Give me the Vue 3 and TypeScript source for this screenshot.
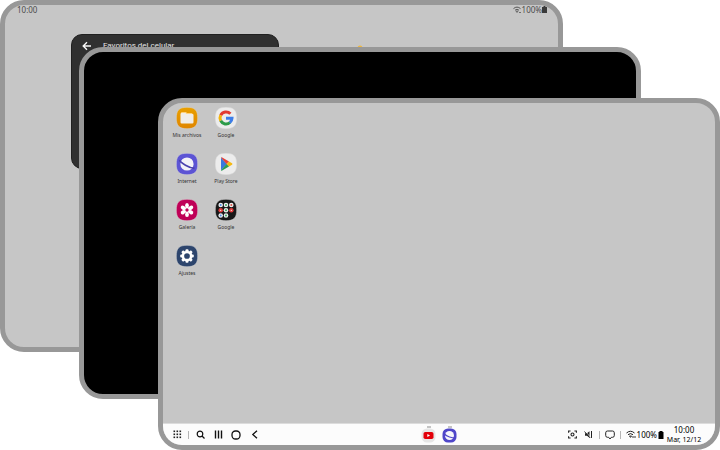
<script setup lang="ts">
type IconName = 'files' | 'google' | 'internet' | 'play' | 'gallery' | 'folder' | 'settings'

interface AppShortcut {
  label: string
  icon: IconName
}

const columns: AppShortcut[][] = [
  [
    { label: 'Mis archivos', icon: 'files' },
    { label: 'Internet', icon: 'internet' },
    { label: 'Galería', icon: 'gallery' },
    { label: 'Ajustes', icon: 'settings' },
  ],
  [
    { label: 'Google', icon: 'google' },
    { label: 'Play Store', icon: 'play' },
    { label: 'Google', icon: 'folder' },
  ],
]

const petals: number[] = [0, 60, 120, 180, 240, 300]
const teeth: number[] = [0, 45, 90, 135, 180, 225, 270, 315]
const dots: number[] = [1, 4, 7]
const folderItems: { x: number; y: number; red: boolean }[] = [
  { x: 5.7, y: 6, red: false },
  { x: 11, y: 6, red: false },
  { x: 16.3, y: 6, red: false },
  { x: 5.7, y: 11.3, red: true },
  { x: 11, y: 11.3, red: false },
  { x: 16.3, y: 11.3, red: true },
  { x: 5.7, y: 16.5, red: false },
  { x: 11, y: 16.5, red: false },
]
</script>

<template>
  <main class="stage">
    <section class="device device-back">
      <header class="status">
        <time>10:00</time>
        <span class="status-right">
          <svg width="9" height="8" viewBox="0 0 9 8" fill="none" stroke="#555">
            <path d="M.5 2.6Q4 -.4 7.5 2.6M2 4.2Q4 2.6 6 4.2" />
            <path d="M4 6.5 3 5.2h2zM6 6.5h2" stroke-width=".8" />
          </svg>
          100%
          <svg width="5" height="7" viewBox="0 0 5 7" fill="#3a3a3a">
            <path d="M1.5 0h2v1H5v6H0V1h1.500z" />
          </svg>
        </span>
      </header>
      <article class="panel">
        <button class="panel-back" aria-label="Atrás">
          <svg width="10" height="10" viewBox="0 0 10 10" fill="none" stroke="#f5f5f5" stroke-width="1.4">
            <path d="M9 5H1.500M5 1.200 1.200 5 5 8.800" />
          </svg>
        </button>
        <h2>Favoritos del celular</h2>
      </article>
      <svg class="spark" width="6" height="6" viewBox="0 0 6 6">
        <circle cx="3" cy="3" r="2.500" fill="#efb73e" />
      </svg>
    </section>

    <section class="device device-middle"></section>

    <section class="device device-front">
      <nav class="desktop">
        <div v-for="(column, c) in columns" :key="c" class="column">
          <button v-for="app in column" :key="app.icon" class="app">
            <svg width="22" height="22" viewBox="0 0 22 22">
              <defs>
                <linearGradient id="amber" x1="0" y1="0" x2="0" y2="1">
                  <stop offset="0" stop-color="#e9a000" />
                  <stop offset="1" stop-color="#df8500" />
                </linearGradient>
              </defs>
              <path
                class="tile"
                :class="app.icon"
                d="M11 .3C18.800 .3 21.700 3.200 21.700 11S18.800 21.700 11 21.700 .3 18.800 .3 11 3.200 .3 11 .3z"
              />
              <g v-if="app.icon === 'files'">
                <path d="M5 6q0-1 1-1h4l1 1h4.500q1 0 1 1v3H5z" fill="#ffd27a" />
                <path d="M4.500 7q0-1 1-1h4l1 1h6q1 0 1 1v7.300q0 1.200-1.200 1.200H5.700q-1.200 0-1.200-1.200z" fill="#f0ede8" />
              </g>
              <g v-else-if="app.icon === 'google'" fill="none" stroke-width="3">
                <path d="M5.700 8.200A6 6 0 0 1 15.400 6.800" stroke="#e23a30" />
                <path d="M5.700 13.800A6 6 0 0 1 5.700 8.200" stroke="#f3b50c" />
                <path d="M15 15.500A6 6 0 0 1 5.700 13.800" stroke="#2c9b48" />
                <path d="M11 11.200h6A6 6 0 0 1 14.800 15.600" stroke="#3d7de8" />
              </g>
              <g v-else-if="app.icon === 'internet'">
                <circle cx="11" cy="11" r="6.600" fill="#f4f3f8" />
                <path d="M3.500 7Q4 9 9.500 12.200T18.500 15" fill="none" stroke="#4b43ae" stroke-width="1.700" />
              </g>
              <g v-else-if="app.icon === 'play'">
                <path d="M6 4.500v13L12 11z" fill="#3a78dc" />
                <path d="M6 4.500q.5-.5 1.200-.1L14 8.500 11.500 11z" fill="#e84236" />
                <path d="M14 8.500 17 10.200q1 .8 0 1.600L14 13.500 11.500 11z" fill="#f5b912" />
                <path d="M6 17.500q.5.500 1.200.1L14 13.500 11.500 11z" fill="#2d9d50" />
              </g>
              <g v-else-if="app.icon === 'gallery'">
                <ellipse
                  v-for="angle in petals"
                  :key="angle"
                  cx="11"
                  cy="6.500"
                  rx="1.900"
                  ry="2.500"
                  fill="#fff"
                  :transform="`rotate(${angle} 11 11)`"
                />
                <circle cx="11" cy="11" r="2.300" fill="none" stroke="#fff" stroke-width="1.200" />
              </g>
              <g v-else-if="app.icon === 'folder'">
                <g v-for="(item, i) in folderItems" :key="i">
                  <circle :cx="item.x" :cy="item.y" r="2.300" :fill="item.red ? '#e03b3b' : '#eee'" />
                  <circle v-if="!item.red" :cx="item.x" :cy="item.y" r="1" :fill="['#4c8be8', '#38a35c', '#dd5547'][i % 3]" />
                  <circle v-else :cx="item.x" :cy="item.y" r=".6" fill="#fff" />
                </g>
              </g>
              <g v-else>
                <rect
                  v-for="angle in teeth"
                  :key="angle"
                  x="9.500"
                  y="4.200"
                  width="3"
                  height="3"
                  rx="1"
                  fill="#fff"
                  :transform="`rotate(${angle} 11 11)`"
                />
                <circle cx="11" cy="11" r="4.100" fill="none" stroke="#fff" stroke-width="2.500" />
              </g>
            </svg>
            <span>{{ app.label }}</span>
          </button>
        </div>
      </nav>

      <footer class="taskbar">
        <div class="group">
          <button aria-label="Aplicaciones">
            <svg width="9" height="9" viewBox="0 0 9 9" fill="#222">
              <template v-for="y in dots" :key="y">
                <rect v-for="x in dots" :key="x" :x="x - .5" :y="y - .5" width="1.600" height="1.600" />
              </template>
            </svg>
          </button>
          <i class="divider"></i>
          <button aria-label="Buscar">
            <svg width="9" height="9" viewBox="0 0 9 9" fill="none" stroke="#111" stroke-width="1.200">
              <circle cx="4" cy="4" r="2.800" />
              <path d="M6 6 8.500 8.500" />
            </svg>
          </button>
          <button aria-label="Recientes">
            <svg width="9" height="9" viewBox="0 0 9 9" stroke="#111" stroke-width="1.400">
              <path d="M1.500 .5v8M4.500 .5v8M7.500 .5v8" />
            </svg>
          </button>
          <button aria-label="Inicio">
            <svg width="10" height="10" viewBox="0 0 10 10" fill="none" stroke="#111" stroke-width="1.300">
              <rect x="1" y="1" width="8" height="8" rx="3.500" />
            </svg>
          </button>
          <button aria-label="Atrás">
            <svg width="9" height="9" viewBox="0 0 9 9" fill="none" stroke="#111" stroke-width="1.300">
              <path d="M7 .7 2.800 4.500 7 8.300" />
            </svg>
          </button>
        </div>

        <div class="group running">
          <button aria-label="YouTube">
            <svg width="15" height="15" viewBox="0 0 15 15">
              <rect x=".5" y=".5" width="14" height="14" rx="5.500" fill="#e6e6e6" />
              <rect x="2.500" y="4" width="10" height="7" rx="1.800" fill="#e3000b" />
              <path d="M6.300 5.900v3.200L9 7.500z" fill="#fff" />
            </svg>
          </button>
          <button aria-label="Internet">
            <svg width="15" height="15" viewBox="0 0 15 15">
              <rect x=".5" y=".5" width="14" height="14" rx="5.500" fill="#4f46c9" />
              <circle cx="7.500" cy="7.500" r="4.500" fill="#f6f6fb" />
              <path d="M2 5.500Q4 8 7.500 9T13 10" fill="none" stroke="#4f46c9" stroke-width="1.300" />
            </svg>
          </button>
        </div>

        <div class="group tray">
          <button aria-label="Captura de pantalla">
            <svg width="9" height="9" viewBox="0 0 9 9" fill="none" stroke="#222" stroke-width="1.100">
              <path d="M.6 2.800V1h2M6.400 1h2v1.800M8.400 6.200V8h-2M2.600 8h-2V6.200" />
              <circle cx="4.500" cy="4.500" r="1.500" />
            </svg>
          </button>
          <button aria-label="Silencio">
            <svg width="9" height="9" viewBox="0 0 9 9" fill="none" stroke="#222">
              <path d="M1 3.300h2L5.500 1.200v6.600L3 5.700H1z" fill="#222" stroke="none" />
              <path d="M7.500 1v7" />
              <path d="M1 1 7 8" stroke="#fcfcfc" stroke-width=".8" />
              <path d="M.5 1.500 6.200 8" stroke-width=".9" />
            </svg>
          </button>
          <i class="divider"></i>
          <button aria-label="Notificaciones">
            <svg width="10" height="10" viewBox="0 0 10 10" fill="none" stroke="#222">
              <path d="M2.500 1h5q1.800 0 1.800 1.800v2.700q0 1.800-1.800 1.800H6.300L5 9 3.700 7.300H2.500Q.7 7.300.7 5.500V2.800Q.7 1 2.500 1z" />
            </svg>
          </button>
          <i class="divider"></i>
          <button class="power" aria-label="Ajustes rápidos">
            <svg width="10" height="9" viewBox="0 0 10 9" fill="none" stroke="#222">
              <path d="M.5 3Q4.500-.5 8.500 3M2 4.700Q4.500 2.500 7 4.700" />
              <path d="M4.500 7.400 3.500 6h2zM7 6v2M9 6v2" stroke-width=".9" />
            </svg>
            <span>100%</span>
            <svg width="6" height="8" viewBox="0 0 6 8" fill="#000">
              <path d="M1.500 0h3v1h1v7h-5V1h1z" />
            </svg>
          </button>
          <div class="clock">
            <time>10:00</time>
            <small>Mar, 12/12</small>
          </div>
        </div>
      </footer>
    </section>
  </main>
</template>

<style>
body {
  margin: 0;
  background: #fff;
}
</style>

<style scoped>
.stage {
  position: relative;
  min-height: 100vh;
  overflow: hidden;
  font-family: "Noto Sans", "Liberation Sans", sans-serif;
  color: #222;
}

button {
  display: flex;
  align-items: center;
  justify-content: center;
  padding: 0;
  border: 0;
  background: none;
  color: inherit;
  font: inherit;
}

svg {
  display: block;
  flex: none;
}

/* Overlapping device windows */
.device {
  position: absolute;
  box-sizing: border-box;
  border: 5px solid #989898;
  border-radius: 24px;
  background: #c6c6c6;
  overflow: hidden;
}

.device-back {
  inset: 0 157px 98px 0;
}

.device-middle {
  inset: 47px 79px 51px 79px;
  background: #000;
}

.device-front {
  inset: 98px 0 0 158px;
  display: flex;
  flex-direction: column;
}

.status {
  display: flex;
  justify-content: space-between;
  padding: 0 11px 0 12px;
  font-size: 8px;
  line-height: 9px;
  color: #4c4c4c;
}

.status-right {
  display: flex;
  align-items: center;
}

.panel {
  display: flex;
  align-items: flex-start;
  gap: 11px;
  box-sizing: border-box;
  width: 208px;
  height: 135px;
  margin: 20px 0 0 66px;
  padding: 5px 10px;
  border: 1px solid #202020;
  border-radius: 11px;
  background: #303030;
}

.panel-back {
  height: 12px;
}

.panel h2 {
  margin: 0;
  font-family: Roboto, "Liberation Sans", sans-serif;
  font-size: 8px;
  font-weight: 400;
  line-height: 12px;
  color: #e4e4e4;
}

.spark {
  position: absolute;
  top: 40px;
  left: 352px;
}

.desktop {
  flex: 1;
  display: flex;
  gap: 3px;
  padding: 4px 6px;
}

.column {
  display: flex;
  flex-direction: column;
  gap: 10px;
  width: 36px;
}

.app {
  flex-direction: column;
  justify-content: flex-start;
  gap: 2px;
  height: 36px;
  font-size: 5px;
  line-height: 8px;
  color: #333;
  white-space: nowrap;
}

.tile {
  stroke: #d8d8d8;
  stroke-width: 0.5px;
}

.tile.files {
  fill: url(#amber);
}

.tile.google,
.tile.play {
  fill: #ececec;
}

.tile.internet {
  fill: #5c54d4;
}

.tile.gallery {
  fill: #bf0057;
}

.tile.folder {
  fill: #181818;
}

.tile.settings {
  fill: #2d456d;
}

.taskbar {
  display: grid;
  grid-template-columns: 1fr auto 1fr;
  align-items: center;
  height: 21px;
  border-top: 1px solid #dcdcdc;
  background: #fcfcfc;
}

.group {
  display: flex;
  align-items: center;
  padding-left: 5px;
}

.group button {
  width: 18px;
  height: 20px;
}

.divider {
  width: 1px;
  height: 8px;
  margin: 0 2px;
  background: #b5b5b5;
}

.running {
  padding: 0;
}

.running button {
  flex-direction: column;
  width: 21px;
}

.running button::before {
  content: "";
  width: 4px;
  height: 2px;
  background: #c4c4c4;
}

.tray {
  justify-content: flex-end;
  padding: 0 14px 0 0;
}

.tray button {
  width: 16px;
}

.tray .power {
  gap: 1px;
  width: auto;
  margin: 0 3px;
  font-size: 8px;
  line-height: 10px;
  color: #000;
}

.clock {
  display: flex;
  flex-direction: column;
  align-items: center;
  width: 34px;
  font-size: 8px;
  line-height: 10px;
  color: #000;
  white-space: nowrap;
}

.clock small {
  font-size: 7px;
}
</style>
